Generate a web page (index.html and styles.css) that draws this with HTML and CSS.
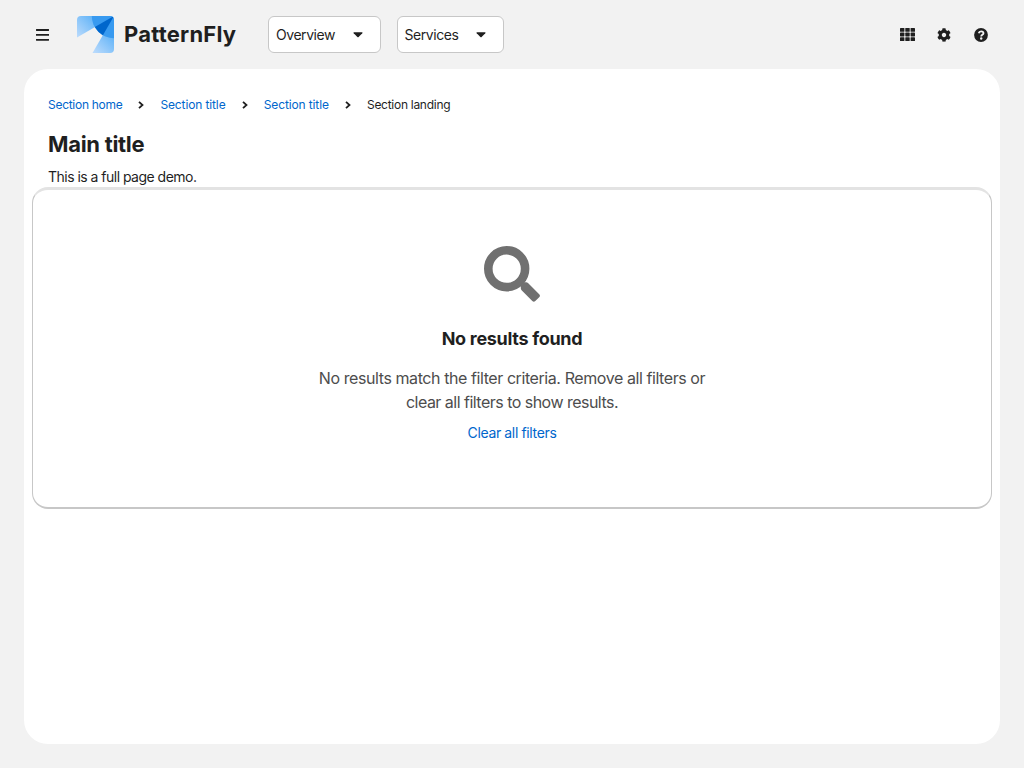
FILE: index.html
```html
<!DOCTYPE html>
<html lang="en">
<head>
<meta charset="utf-8">
<title>PatternFly</title>
<link rel="stylesheet" href="styles.css">
</head>
<body>
<header class="masthead">
  <button class="icon-btn menu" aria-label="Menu"><svg width="13" height="12" viewBox="0 0 13 12"><path d="M.5 1h12M.5 5.9h12M.5 10.8h12" stroke="currentColor" stroke-width="1.8" stroke-linecap="round"/></svg></button>
  <a class="brand">
    <svg width="37" height="37" viewBox="0 0 37 37">
      <defs>
        <linearGradient id="a" gradientUnits="userSpaceOnUse" x1="17" y1="4" x2="0" y2="20"><stop offset="0" stop-color="#67b6f8"/><stop offset="1" stop-color="#b9dafc"/></linearGradient>
        <linearGradient id="b" gradientUnits="userSpaceOnUse" x1="34" y1="20" x2="18" y2="37"><stop offset="0" stop-color="#67b6f8"/><stop offset="1" stop-color="#b9dafc"/></linearGradient>
        <clipPath id="c"><rect width="37" height="37" rx="4"/></clipPath>
      </defs>
      <g clip-path="url(#c)">
        <path d="M0 0H37L0 21.5Z" fill="url(#a)"/>
        <path d="M37 0V37H15.5Z" fill="url(#b)"/>
        <path d="M14.8 0A22.2 22.2 0 0 0 37 22.2V0Z" fill="#389af0"/>
        <path d="M37 0L17.8 11.1A22.2 22.2 0 0 0 25.9 19.2Z" fill="#06c"/>
      </g>
    </svg>
    <span class="brand-name">PatternFly</span>
  </a>
  <nav class="toggles">
    <button class="toggle overview"><span>Overview</span><svg width="10" height="6" viewBox="0 0 10 6"><path d="M1 .3h8q1 .1.3.9L5.6 5q-.6.6-1.2 0L.7 1.2Q0 .4 1 .3Z" fill="currentColor"/></svg></button>
    <button class="toggle services"><span>Services</span><svg width="10" height="6" viewBox="0 0 10 6"><path d="M1 .3h8q1 .1.3.9L5.6 5q-.6.6-1.2 0L.7 1.2Q0 .4 1 .3Z" fill="currentColor"/></svg></button>
  </nav>
  <div class="tools">
    <button class="icon-btn" aria-label="Applications"><svg width="15" height="13" viewBox="0 0 15 13" fill="currentColor"><g id="r"><rect width="4.4" height="3.8" rx=".6"/><rect x="5.3" width="4.4" height="3.8" rx=".6"/><rect x="10.6" width="4.4" height="3.8" rx=".6"/></g><use href="#r" y="4.6"/><use href="#r" y="9.2"/></svg></button>
    <button class="icon-btn" aria-label="Settings"><svg width="14" height="14" viewBox="0 0 512 512"><path fill="currentColor" d="M487.4 315.7l-42.6-24.6c4.3-23.2 4.3-47 0-70.2l42.6-24.6c4.9-2.8 7.1-8.6 5.5-14-11.1-35.6-30-67.8-54.7-94.6-3.8-4.1-10-5.1-14.8-2.3L380.8 110c-17.9-15.4-38.5-27.3-60.8-35.1V25.8c0-5.6-3.9-10.5-9.4-11.7-36.7-8.2-74.3-7.8-109.2 0-5.5 1.2-9.4 6.1-9.4 11.7V75c-22.2 7.9-42.8 19.8-60.8 35.1L88.7 85.5c-4.900-2.800-11-1.900-14.800 2.300-24.700 26.700-43.600 58.900-54.700 94.600-1.700 5.400.600 11.200 5.500 14L67.300 221c-4.300 23.200-4.300 47 0 70.200l-42.600 24.600c-4.900 2.800-7.100 8.600-5.500 14 11.100 35.600 30 67.800 54.700 94.600 3.800 4.100 10 5.100 14.800 2.300l42.600-24.600c17.900 15.400 38.500 27.300 60.800 35.100v49.200c0 5.600 3.900 10.500 9.400 11.700 36.700 8.200 74.300 7.800 109.200 0 5.500-1.200 9.400-6.100 9.400-11.700v-49.200c22.200-7.900 42.800-19.800 60.800-35.100l42.600 24.600c4.900 2.800 11 1.900 14.800-2.300 24.700-26.700 43.600-58.900 54.700-94.600 1.500-5.500-.700-11.300-5.600-14.100zM256 336c-44.100 0-80-35.900-80-80s35.900-80 80-80 80 35.900 80 80-35.900 80-80 80z"/></svg></button>
    <button class="icon-btn" aria-label="Help"><svg width="14" height="14" viewBox="0 0 14 14"><circle cx="7" cy="7" r="6.9" fill="currentColor"/><path d="M4.700 5.200C5 4 5.900 3.300 7.100 3.300c1.400 0 2.400.8 2.400 2C9.500 6.900 7.200 6.800 7.200 8.400" fill="none" stroke="#f2f2f2" stroke-width="1.800"/><circle cx="7.200" cy="10.500" r="1.200" fill="#f2f2f2"/></svg></button>
  </div>
</header>
<main class="page">
  <nav class="breadcrumb">
    <a class="home">Section home</a><svg class="sep" width="6" height="8" viewBox="0 0 6 8"><path d="M1 .8 4.500 4 1 7.200"/></svg>
    <a class="title-link">Section title</a><svg class="sep" width="6" height="8" viewBox="0 0 6 8"><path d="M1 .8 4.500 4 1 7.200"/></svg>
    <a class="title-link">Section title</a><svg class="sep" width="6" height="8" viewBox="0 0 6 8"><path d="M1 .8 4.500 4 1 7.200"/></svg>
    <span class="landing">Section landing</span>
  </nav>
  <h1>Main title</h1>
  <p class="intro">This is a full page demo.</p>
  <section class="card">
    <svg class="search" width="56" height="56" viewBox="0 0 56 56"><circle cx="22.700" cy="22.700" r="18.400" fill="none" stroke="#707070" stroke-width="8.600"/><path d="M36.800 41.500V39.500Q38.500 38 40 36.300H42.200Q43.200 36.300 44 37.100L55.200 48.200Q56.700 49.700 55.200 51.200L51.300 55.100Q49.800 56.600 48.300 55.100L37.600 44.200Q36.800 43.400 36.800 42.300Z" fill="#707070"/></svg>
    <h2>No results found</h2>
    <p class="message"><span class="line">No results match the filter criteria. Remove all filters or</span><span class="line">clear all filters to show results.</span></p>
    <a class="clear">Clear all filters</a>
  </section>
</main>
</body>
</html>
```
FILE: styles.css
```css
* { box-sizing: border-box; }
body { margin: 0; height: 768px; background: #f2f2f2; color: #1f1f1f; font: 14px/21px Inter, sans-serif; white-space: nowrap; overflow: hidden; }
h1, h2, p { margin: 0; }
button { font: inherit; color: inherit; padding: 0; }
a { color: #06c; }
.masthead { height: 69px; display: flex; align-items: center; padding: 0 24.5px 0 24px; }
.icon-btn { width: 37px; height: 37px; border: 0; background: none; display: flex; align-items: center; justify-content: center; }
.brand { display: flex; align-items: center; gap: 10px; margin-left: 16px; width: 191px; color: #1f1f1f; }
.brand-name { font-weight: 700; font-size: 22px; letter-spacing: .22px; }
.toggles { display: flex; gap: 16px; }
.toggle { height: 37px; border: 1px solid #c7c7c7; border-radius: 6px; background: #fff; display: flex; align-items: center; justify-content: space-between; padding: 0 17px 0 7px; letter-spacing: -.45px; }
.overview { width: 112.5px; }
.services { width: 107px; }
.tools { display: flex; margin-left: auto; }
.page { height: 675px; margin: 0 24px; padding: 26px 8px 0; background: #fff; border-radius: 24px; }
.breadcrumb { height: 20px; margin-left: 16px; display: flex; align-items: center; font-size: 12px; line-height: 18px; letter-spacing: -.28px; }
.sep { margin: 0 16px; fill: none; stroke: #1f1f1f; stroke-width: 1.8; }
.home { width: 74.4px; }
.title-link { width: 65.3px; letter-spacing: -.12px; }
h1 { margin: 15px 16px 0; font-size: 22px; line-height: 29px; font-weight: 700; letter-spacing: -.3px; }
.intro { margin: 7px 16px 0; letter-spacing: -.52px; }
.card { height: 322px; border: 1px solid #c7c7c7; border-top: 3px solid #e3e3e3; border-bottom-width: 2px; border-radius: 16px; display: flex; flex-direction: column; align-items: center; padding-top: 56px; }
.search { display: block; }
h2 { margin-top: 24px; font-size: 18px; line-height: 26px; font-weight: 700; letter-spacing: -.3px; }
.message { margin-top: 14px; display: flex; flex-direction: column; align-items: center; font-size: 16px; line-height: 24px; letter-spacing: -.42px; color: #4d4d4d; }
.line:last-child { letter-spacing: -.52px; }
.clear { margin-top: 8px; letter-spacing: -.36px; }
```
